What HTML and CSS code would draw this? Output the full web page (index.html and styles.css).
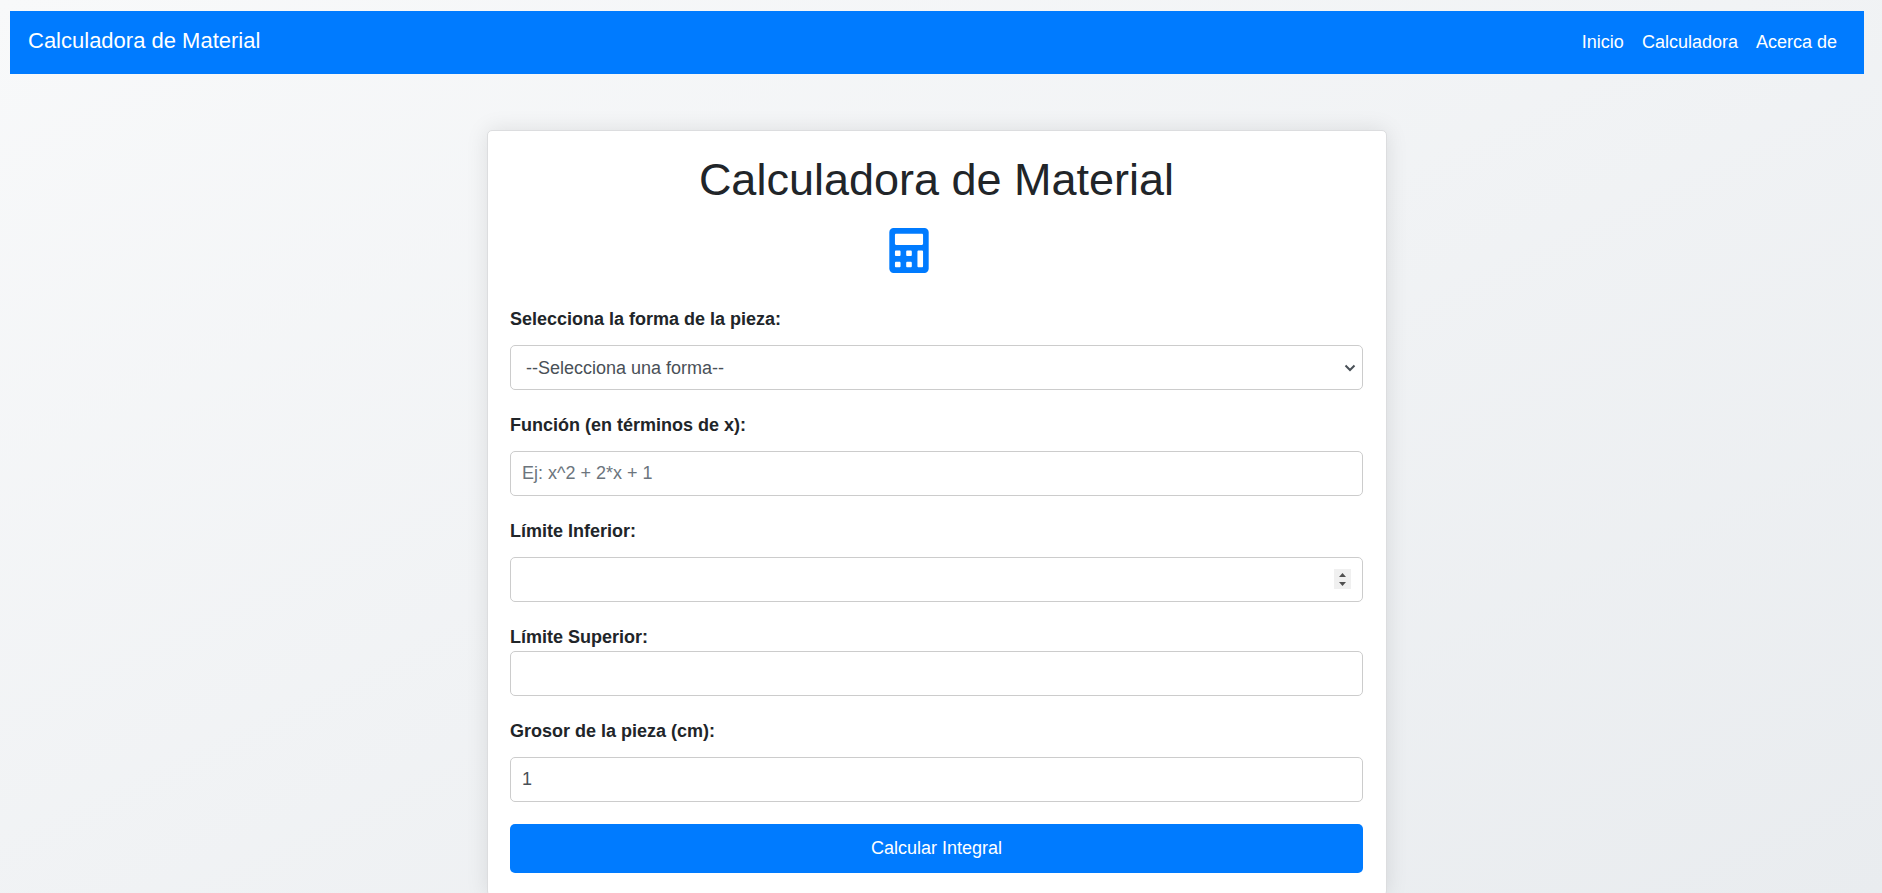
FILE: index.html
```html
<!DOCTYPE html>
<html lang="es">
<head>
  <meta charset="utf-8">
  <meta name="viewport" content="width=device-width, initial-scale=1">
  <title>Calculadora de Material</title>
  <link rel="stylesheet" href="styles.css">
</head>
<body>
  <nav class="navbar">
    <a class="navbar-brand" href="#">Calculadora de Material</a>
    <ul class="navbar-nav">
      <li><a class="nav-link" href="#">Inicio</a></li>
      <li><a class="nav-link" href="#">Calculadora</a></li>
      <li><a class="nav-link" href="#">Acerca de</a></li>
    </ul>
  </nav>

  <main class="card">
    <h1 class="card-title">Calculadora de Material</h1>
    <div class="card-icon">
      <svg class="icon" viewBox="0 0 448 512" aria-hidden="true">
        <path fill="currentColor" fill-rule="evenodd" d="M400 0H48C22.400 0 0 22.400 0 48v416c0 25.600 22.400 48 48 48h352c25.600 0 48-22.400 48-48V48c0-25.600-22.400-48-48-48zM76.800 64h294.400c6.400 0 12.800 6.400 12.800 12.800v102.400c0 6.400-6.400 12.800-12.800 12.800H76.800c-6.400 0-12.800-6.400-12.800-12.800V76.800c0-6.400 6.400-12.800 12.800-12.800zM76.800 256h38.400c6.400 0 12.800 6.400 12.800 12.800v38.400c0 6.400-6.400 12.800-12.800 12.800H76.800c-6.400 0-12.800-6.400-12.800-12.800v-38.400c0-6.400 6.400-12.800 12.800-12.800zM204.800 256h38.400c6.400 0 12.800 6.400 12.800 12.800v38.400c0 6.400-6.400 12.800-12.800 12.800h-38.400c-6.400 0-12.800-6.400-12.800-12.800v-38.400c0-6.400 6.400-12.800 12.800-12.800zM332.800 256h38.400c6.400 0 12.800 6.400 12.800 12.800v166.400c0 6.400-6.400 12.800-12.800 12.800h-38.400c-6.400 0-12.800-6.400-12.800-12.800V268.800c0-6.400 6.400-12.800 12.800-12.800zM76.800 384h38.400c6.400 0 12.800 6.400 12.800 12.800v38.400c0 6.400-6.400 12.800-12.800 12.800H76.800c-6.400 0-12.800-6.400-12.800-12.800v-38.400c0-6.400 6.400-12.800 12.800-12.800zM204.800 384h38.400c6.400 0 12.800 6.400 12.800 12.800v38.400c0 6.400-6.400 12.800-12.800 12.800h-38.400c-6.400 0-12.800-6.400-12.800-12.800v-38.400c0-6.400 6.400-12.800 12.800-12.800z"/>
      </svg>
    </div>

    <form class="form">
      <div class="form-group">
        <label for="forma">Selecciona la forma de la pieza:</label>
        <select class="form-control form-select" id="forma">
          <option>--Selecciona una forma--</option>
        </select>
      </div>
      <div class="form-group">
        <label for="funcion">Función (en términos de x):</label>
        <input class="form-control" type="text" id="funcion" placeholder="Ej: x^2 + 2*x + 1">
      </div>
      <div class="form-group">
        <label for="inferior">Límite Inferior:</label>
        <input class="form-control show-spinner" type="number" id="inferior">
      </div>
      <div class="form-group form-group-tight">
        <label for="superior">Límite Superior:</label>
        <input class="form-control" type="number" id="superior">
      </div>
      <div class="form-group">
        <label for="grosor">Grosor de la pieza (cm):</label>
        <input class="form-control" type="number" id="grosor" value="1">
      </div>
      <button class="btn" type="button">Calcular Integral</button>
    </form>
  </main>
</body>
</html>
```

FILE: styles.css
```css
* {
  box-sizing: border-box;
}

body {
  margin: 0;
  padding: 11px 18px 0 10px;
  background: linear-gradient(to bottom right, #f8f9fa, #e9ecef);
  color: #212529;
  font-family: Arial, "Liberation Sans", sans-serif;
  font-size: 18px;
  line-height: 27px;
}

.navbar {
  display: flex;
  align-items: baseline;
  justify-content: space-between;
  padding: 13px 18px 17px;
  background: #007bff;
}

.navbar a {
  color: #fff;
  text-decoration: none;
}

.navbar-brand {
  font-size: 22px;
  line-height: 33px;
}

.navbar-nav {
  display: flex;
  margin: 0;
  padding: 0;
  list-style: none;
}

.nav-link {
  padding: 9px;
}

.card {
  max-width: 900px;
  margin: 56px auto 0;
  padding: 22px 23px 22px 22px;
  border: 1px solid #dcdddf;
  border-radius: 5px;
  background: #fff;
  box-shadow: 0 0 22px rgba(0, 0, 0, 0.1);
}

.card-title {
  margin: 0 0 21px;
  font-size: 45px;
  font-weight: 400;
  line-height: 54px;
  text-align: center;
}

.card-icon {
  display: flex;
  justify-content: center;
  margin-bottom: 33px;
  padding-right: 56px;
  color: #007bff;
}

.icon {
  width: 40px;
  height: 45px;
}

.form-group {
  display: flex;
  flex-direction: column;
  gap: 12px;
  margin-bottom: 22px;
}

.form-group-tight {
  gap: 0;
}

label {
  font-weight: 700;
}

.form-control {
  width: 100%;
  height: 45px;
  padding: 7px 11px;
  border: 1px solid #ccc;
  border-radius: 5px;
  background: #fff;
  color: #495057;
  font: inherit;
}

.form-select {
  padding: 8px 28px 7px 15px;
  appearance: none;
  background: #fff url("data:image/svg+xml,%3Csvg xmlns='http://www.w3.org/2000/svg' width='12' height='8'%3E%3Cpath d='M1.500 1.500L6 6l4.500-4.500' fill='none' stroke='%23495057' stroke-width='2'/%3E%3C/svg%3E") no-repeat right 6px center;
}

.form-control::placeholder {
  color: #6c757d;
  opacity: 1;
}

.show-spinner::-webkit-inner-spin-button {
  width: 17px;
  height: 20px;
  appearance: none;
  background: #f0f0f0 url("data:image/svg+xml,%3Csvg xmlns='http://www.w3.org/2000/svg' width='17' height='20'%3E%3Cpath d='M5 8L8.500 4L12 8zM5 13L8.500 17L12 13z' fill='%23505050'/%3E%3C/svg%3E") no-repeat center;
  opacity: 1;
}

.btn {
  width: 100%;
  padding: 11px;
  border: 0;
  border-radius: 5px;
  background: #007bff;
  color: #fff;
  font: inherit;
}
```
